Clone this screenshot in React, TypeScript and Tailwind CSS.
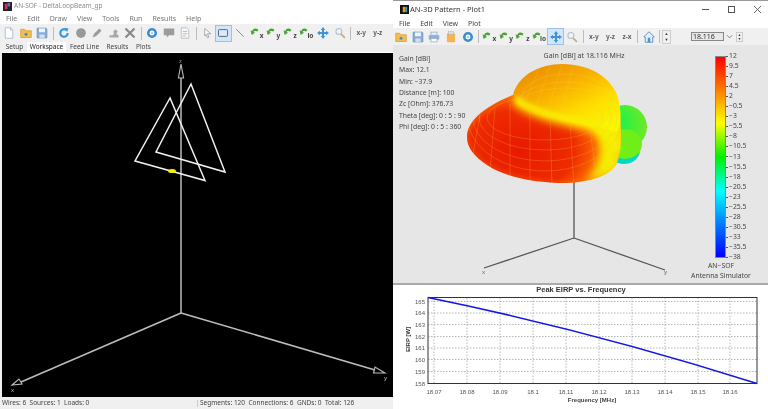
import type { ReactNode } from "react"

const font = "font-['Noto_Sans','Open_Sans',sans-serif]"

function Ic({ children }: { children: ReactNode }) {
  return (
    <svg viewBox="0 0 16 16" className="h-[12px] w-[12px]">
      {children}
    </svg>
  )
}

const FileNew = () => (
  <Ic><path d="M3 1h7l3 3v11H3z" fill="#fff" stroke="#9db0c4" /><path d="M10 1v3h3" fill="#dde6ee" stroke="#9db0c4" /></Ic>
)
const Folder = () => (
  <Ic><path d="M1 3h5l1 2h8v9H1z" fill="#f7bd4c" stroke="#d59a30" /><circle cx="8" cy="9.500" r="2" fill="#3f8dd8" /></Ic>
)
const Save = () => (
  <Ic><path d="M1.500 1.500h12l1 1v12h-13z" fill="#86add8" stroke="#6a94c0" /><rect x="4" y="2" width="8" height="5" fill="#eef4fa" /><rect x="4.500" y="10" width="7" height="4.500" fill="#d4e0ec" /></Ic>
)
const Refresh = () => (
  <Ic><path d="M13 8a5 5 0 1 1-2-4" fill="none" stroke="#3d9ade" strokeWidth="3" /><path d="M9 1l5 1-2 5z" fill="#3d9ade" /></Ic>
)
const Dot = () => <Ic><circle cx="8" cy="8" r="6.500" fill="#999" /></Ic>
const Pencil = () => <Ic><path d="M2 14l2-5 7-7 3 3-7 7z" fill="#9c9c9c" /></Ic>
const Stamp = () => (
  <Ic><path d="M2 14v-3h4l2-2-1-3 3-3 3 3-2 3 3 2v3z" fill="#a8a8a8" /></Ic>
)
const Cross = () => <Ic><path d="M2 2l12 12M14 2L2 14" stroke="#8a8a8a" strokeWidth="3" /></Ic>
const Gear = () => (
  <Ic><circle cx="8" cy="8" r="5" fill="#fff" stroke="#3d8dd0" strokeWidth="3.400" /><circle cx="8" cy="8" r="1.500" fill="#9cc4e6" /></Ic>
)
const Comment = () => <Ic><path d="M1 2h14v9H8l-3 3v-3H1z" fill="#9c9c9c" /></Ic>
const Doc = () => (
  <Ic><path d="M3 1h7l3 3v11H3z" fill="#f4f7fa" stroke="#a6b6c6" /><path d="M5 6h6M5 9h6M5 12h4" stroke="#e0a840" /></Ic>
)
const Cursor = () => <Ic><path d="M5 2l8 7H8.500l2 4.500-1.800 1-2-4.500L5 12z" fill="#fff" stroke="#7f90a2" /></Ic>
const RectTool = () => <Ic><rect x="2" y="3.500" width="12" height="9" rx="1" fill="#dceaf8" stroke="#4a5c70" strokeWidth="1.200" /></Ic>
const LineTool = () => <Ic><path d="M3 3l10 10" stroke="#777" strokeWidth="1.100" /></Ic>
const Move = () => (
  <Ic><path d="M8 0l3 4H9.400v2.600H12V5l4 3-4 3V9.400H9.400V12H11l-3 4-3-4h1.600V9.400H4V11L0 8l4-3v1.600h2.600V4H5z" fill="#3d94de" /></Ic>
)
const Magnify = () => (
  <Ic><circle cx="6.500" cy="6" r="4" fill="#eef3f8" stroke="#b2c0cc" strokeWidth="1.400" /><path d="M9.500 9.500l5 5" stroke="#c4ab78" strokeWidth="2.200" /></Ic>
)
const Printer = () => (
  <Ic><rect x="4" y="1.500" width="8" height="4" fill="#eef3f8" stroke="#8fabcb" /><rect x="1" y="5.500" width="14" height="6" fill="#8fb0d4" /><rect x="4" y="10" width="8" height="4.500" fill="#fff" stroke="#8fabcb" /></Ic>
)
const Clipboard = () => (
  <Ic><rect x="2.500" y="3" width="11" height="12" rx="1" fill="#f6b351" /><rect x="5" y="1" width="6" height="3.500" fill="#ddd" stroke="#aaa" strokeWidth=".6" /></Ic>
)
const Home = () => (
  <Ic><path d="M8 1L1 8h2v7h10V8h2z" fill="#e6eff8" stroke="#4f90cc" strokeWidth="1.200" /><rect x="6.300" y="9" width="3.400" height="6" fill="#4f90cc" /></Ic>
)

function Rot({ label }: { label: string }) {
  return (
    <span className="relative flex h-[12px] w-[14px]">
      <svg viewBox="0 0 16 16" className="absolute left-0 top-0 h-[9px] w-[9px]">
        <path d="M15 5C10 1 5 3 4 7L1 6l2 8 6-4-3-1c1-2 4-3 7-1z" fill="#4aa336" />
      </svg>
      <span className="absolute bottom-0 right-0 text-[6.5px] font-bold leading-none text-[#444]">{label}</span>
    </span>
  )
}

function Tool({ children, active }: { children: ReactNode; active?: boolean }) {
  return (
    <div className={`flex h-[17px] w-[16.6px] shrink-0 items-center justify-center ${active ? "border border-[#9cc0ea] bg-[#d3e5f8]" : ""}`}>
      {children}
    </div>
  )
}

const Sep = () => <div className="mx-[2px] h-[13px] w-px shrink-0 bg-[#bdbdbd]" />

const Plane = ({ t }: { t: string }) => (
  <div className="flex h-[17px] w-[16.6px] shrink-0 items-center justify-center text-[6.5px] font-bold text-[#666]">{t}</div>
)

const colorLabels = ["12", "9.5", "7", "4.5", "2", "−0.5", "−3", "−5.5", "−8", "−10.5", "−13", "−15.5", "−18", "−20.5", "−23", "−25.5", "−28", "−30.5", "−33", "−35.5", "−38"]
const info = ["Gain [dBi]", "Max: 12.1", "Min: −37.9", "Distance [m]: 100", "Zc [Ohm]: 376.73", "Theta [deg]: 0 : 5 : 90", "Phi [deg]: 0 : 5 : 360"]

function Workspace() {
  return (
    <svg viewBox="2 52 391 344" className="h-full w-full">
      <g stroke="#bdbdbd" strokeWidth="1.500" fill="none">
        <path d="M181 312V77" />
        <path d="M181 63l-2.600 14h5.200z" strokeWidth="1.100" />
        <path d="M181 312L21 381" />
        <path d="M12 384l7-6 3 5z" strokeWidth="1.100" />
        <path d="M181 312L375 369" />
        <path d="M385 372l-10-6-1.500 6z" strokeWidth="1.100" />
      </g>
      <g stroke="#f2f2f2" strokeWidth="1.500" fill="none" strokeLinejoin="miter">
        <path d="M170 97L135 160L205 179.500Z" />
        <path d="M191 83L156 151L225 171Z" />
      </g>
      <ellipse cx="172" cy="170" rx="4" ry="2" fill="#f5f000" />
      <text x="179" y="62" fontSize="6" fill="#999">z</text>
      <text x="11" y="391" fontSize="6" fill="#bbb">x</text>
      <text x="384" y="379" fontSize="6" fill="#bbb">y</text>
    </svg>
  )
}

function Pattern() {
  const lobe = "M467 137C467 122 482 108 513 95C540 100 590 105 620 110C621 130 622 150 617 163C610 176 590 182 566 183C535 183 505 177 487 165C474 156 467 148 467 137Z"
  const dome = "M513 95C518 75 540 64 562 64C592 64 618 80 620 108C621 116 620 125 617 132C600 128 560 120 540 114C530 110 520 103 513 95Z"
  const crease = "M516 98C528 108 552 116 580 121C595 124 610 132 618 150"
  return (
    <svg viewBox="393 45 375 238" className="absolute inset-0 h-full w-full">
      <defs>
        <radialGradient id="lobeFill" gradientUnits="userSpaceOnUse" cx="520" cy="150" r="108" gradientTransform="translate(0 37.500) scale(1 .75)">
          <stop offset="0" stopColor="#e81800" />
          <stop offset=".5" stopColor="#ee2c00" />
          <stop offset=".72" stopColor="#fb6a00" />
          <stop offset=".92" stopColor="#ffc000" />
          <stop offset="1" stopColor="#fff000" />
        </radialGradient>
        <linearGradient id="domeFill" x1="0" y1="0" x2=".8" y2="1">
          <stop offset="0" stopColor="#e68400" />
          <stop offset=".4" stopColor="#f8ac00" />
          <stop offset=".75" stopColor="#ffe000" />
          <stop offset="1" stopColor="#f8f800" />
        </linearGradient>
        <radialGradient id="sideFill" cx=".2" cy=".45" r=".8">
          <stop offset="0" stopColor="#00f0b0" />
          <stop offset=".4" stopColor="#30f040" />
          <stop offset="1" stopColor="#70e828" />
        </radialGradient>
        <filter id="soft" x="-20%" y="-30%" width="140%" height="160%"><feGaussianBlur stdDeviation="4" /></filter>
        <filter id="softer" x="-20%" y="-30%" width="140%" height="160%"><feGaussianBlur stdDeviation="2" /></filter>
        <clipPath id="lobeClip"><path d={lobe} /></clipPath>
        <clipPath id="domeClip"><path d={dome} /></clipPath>
      </defs>
      <path d="M574 180V238M574 238L484 268M574 238L665 270" stroke="#555" strokeWidth="1.300" fill="none" />
      <text x="482" y="274" fontSize="6" fill="#666">x</text>
      <text x="664" y="274" fontSize="6" fill="#666">y</text>
      <ellipse cx="624" cy="150" rx="16" ry="14" fill="#00d8c8" />
      <ellipse cx="625" cy="127" rx="22" ry="22" fill="url(#sideFill)" />
      <ellipse cx="625" cy="144" rx="17" ry="15" fill="#70ee18" />
      <path d={lobe} fill="url(#lobeFill)" />
      <g clipPath="url(#lobeClip)">
        <path d={lobe} fill="none" stroke="#ff9000" strokeWidth="2" opacity=".5" filter="url(#softer)" />
        <path d={crease} fill="none" stroke="#ffe800" strokeWidth="14" filter="url(#soft)" />
        <path d="M622 115L618 172L585 182C604 165 604 140 594 122Z" fill="#f4ee00" filter="url(#soft)" />
      </g>
      <path d={dome} fill="url(#domeFill)" />
      <path d={crease} fill="none" stroke="#f8ee00" strokeWidth="5" filter="url(#softer)" />
      <g clipPath="url(#lobeClip)" stroke="#ffb84a" strokeWidth=".4" fill="none" opacity=".65">
        <ellipse cx="545" cy="118" rx="58" ry="22" />
        <ellipse cx="545" cy="118" rx="66" ry="32" />
        <ellipse cx="545" cy="118" rx="72" ry="43" />
        <ellipse cx="545" cy="118" rx="77" ry="53" />
        <path d="M480 115L472 160M495 108L490 172M510 104L510 180M530 110L530 184M550 116L552 186M570 122L574 186M590 126L596 180" />
      </g>
      <g clipPath="url(#domeClip)" stroke="#f8d860" strokeWidth=".3" fill="none" opacity=".7">
        <ellipse cx="566" cy="112" rx="54" ry="24" />
        <ellipse cx="566" cy="106" rx="50" ry="24" />
        <ellipse cx="566" cy="98" rx="44" ry="24" />
        <path d="M522 110L540 66M534 112L550 65M546 116L562 64M558 120L574 64" />
      </g>
    </svg>
  )
}

const yTicks = [
  [165, 302], [164, 313.500], [163, 325], [162, 337], [161, 348.500], [160, 360], [159, 372], [158, 384],
]
const xTicks = [
  ["18.07", 434], ["18.08", 467], ["18.09", 500], ["18.1", 533], ["18.11", 566], ["18.12", 599], ["18.13", 632], ["18.14", 665], ["18.15", 698], ["18.16", 730],
] as const

function Chart() {
  return (
    <svg viewBox="393 286 375 123" className="h-full w-full">
      <text x="581" y="292" textAnchor="middle" fontSize="7.500" fontWeight="700" fill="#333" fontFamily="Liberation Sans">Peak EIRP vs. Frequency</text>
      <g stroke="#999" strokeWidth=".7" strokeDasharray="1.500 1.500">
        {yTicks.map(([v, y]) => <path key={v} d={`M428 ${y}H757`} />)}
        {xTicks.map(([v, x]) => <path key={v} d={`M${x} 298V384`} />)}
      </g>
      <rect x="428" y="298" width="329" height="86" fill="none" stroke="#333" strokeWidth="1" />
      <path d="M428 298Q590 331 757 384" fill="none" stroke="#1414e6" strokeWidth="1.500" />
      <g fontSize="6" fill="#555" fontFamily="Liberation Sans">
        {yTicks.map(([v, y]) => <text key={v} x="425" y={y + 2} textAnchor="end">{v}</text>)}
        {xTicks.map(([v, x]) => <text key={v} x={x} y="394" textAnchor="middle">{v}</text>)}
      </g>
      <text x="592" y="402" textAnchor="middle" fontSize="6" fontWeight="700" fill="#444" fontFamily="Liberation Sans">Frequency [MHz]</text>
      <text transform="translate(410 340) rotate(-90)" textAnchor="middle" fontSize="6" fontWeight="700" fill="#333" fontFamily="Liberation Sans">EIRP [W]</text>
    </svg>
  )
}

export default function App() {
  return (
    <div className={`flex h-[409px] w-[768px] overflow-hidden bg-white blur-[0.3px] ${font}`}>
      {/* main window */}
      <div className="flex w-[393px] shrink-0 flex-col bg-[#f0f0f0]">
        <div className="flex h-[13px] shrink-0 items-center gap-[2px] bg-white pl-[3px]">
          <svg viewBox="0 0 10 10" className="h-[9px] w-[9px]">
            <rect width="10" height="10" fill="#222" />
            <rect x="2" y="2" width="3" height="6" fill="#d0306a" />
            <rect x="5" y="1" width="3" height="4" fill="#5b6ad0" />
          </svg>
          <span className="text-[6.5px] leading-none text-[#8a8a8a]">AN-SOF - DeltaLoopBeam_gp</span>
        </div>
        <div className="flex h-[11px] shrink-0 items-center gap-[10px] bg-white pl-[6px] text-[7px] leading-none text-[#777]">
          {["File", "Edit", "Draw", "View", "Tools", "Run", "Results", "Help"].map((m) => <span key={m}>{m}</span>)}
        </div>
        <div className="flex h-[18px] shrink-0 items-center pl-[1px]">
          <Tool><FileNew /></Tool><Tool><Folder /></Tool><Tool><Save /></Tool>
          <Sep />
          <Tool><Refresh /></Tool><Tool><Dot /></Tool><Tool><Pencil /></Tool><Tool><Stamp /></Tool><Tool><Cross /></Tool>
          <Sep />
          <Tool><Gear /></Tool><Tool><Comment /></Tool><Tool><Doc /></Tool>
          <Sep />
          <Tool><Cursor /></Tool><Tool active><RectTool /></Tool><Tool><LineTool /></Tool>
          <Tool><Rot label="x" /></Tool><Tool><Rot label="y" /></Tool><Tool><Rot label="z" /></Tool><Tool><Rot label="io" /></Tool>
          <Tool><Move /></Tool><Tool><Magnify /></Tool>
          <Sep />
          <Plane t="x-y" /><Plane t="y-z" />
        </div>
        <div className="flex h-[10px] shrink-0 items-end pl-[2px] text-[6.5px] leading-none text-[#444]">
          <span className="flex h-[9px] w-[25px] items-center justify-center">Setup</span>
          <span className="flex h-[10px] w-[39px] items-center justify-center bg-white text-[#222]">Workspace</span>
          <span className="flex h-[9px] w-[37px] items-center justify-center">Feed Line</span>
          <span className="flex h-[9px] w-[29px] items-center justify-center">Results</span>
          <span className="flex h-[9px] w-[23px] items-center justify-center">Plots</span>
        </div>
        <div className="h-[1px] shrink-0 bg-white" />
        <div className="ml-[2px] h-[344px] shrink-0 bg-black">
          <Workspace />
        </div>
        <div className="flex h-[13px] shrink-0 items-center text-[6.5px] leading-none text-[#444]">
          <span className="w-[197px] pl-[2px]">Wires: 6&nbsp; Sources: 1&nbsp; Loads: 0</span>
          <span className="border-l border-[#ccc] pl-[2px]">Segments: 120&nbsp; Connections: 6&nbsp; GNDs: 0&nbsp; Total: 126</span>
        </div>
      </div>

      {/* 3D pattern window */}
      <div className="flex w-[375px] shrink-0 flex-col border-t border-[#999]">
        <div className="flex h-[17px] shrink-0 items-center bg-white pl-[7px]">
          <svg viewBox="0 0 10 10" className="mr-[1px] h-[9px] w-[9px]">
            <rect width="10" height="10" fill="#111" />
            <rect x="3" y="2" width="3" height="6" fill="#e8a020" />
            <rect x="6" y="2" width="2" height="6" fill="#3aa0d8" />
          </svg>
          <span className="text-[7.5px] leading-none text-[#333]">AN-3D Pattern - Plot1</span>
          <span className="ml-auto flex items-center gap-[19px] pr-[7px] text-[#555]">
            <span className="h-px w-[7px] bg-[#555]" />
            <span className="h-[7px] w-[7px] border border-[#555]" />
            <svg viewBox="0 0 8 8" className="h-[7px] w-[7px]"><path d="M0 0l8 8M8 0L0 8" stroke="#555" /></svg>
          </span>
        </div>
        <div className="flex h-[10px] shrink-0 items-center gap-[10px] bg-white pl-[6px] text-[7px] leading-none text-[#444]">
          {["File", "Edit", "View", "Plot"].map((m) => <span key={m}>{m}</span>)}
        </div>
        <div className="flex h-[17px] shrink-0 items-center bg-[#f0f0f0]">
          <Tool><Folder /></Tool><Tool><Save /></Tool><Tool><Printer /></Tool><Tool><Clipboard /></Tool><Tool><Gear /></Tool>
          <Sep />
          <Tool><Rot label="x" /></Tool><Tool><Rot label="y" /></Tool><Tool><Rot label="z" /></Tool><Tool><Rot label="io" /></Tool>
          <Tool active><Move /></Tool><Tool><Magnify /></Tool>
          <Sep />
          <Plane t="x-y" /><Plane t="y-z" /><Plane t="z-x" />
          <Sep />
          <Tool><Home /></Tool>
          <Sep />
          <div className="flex h-[14px] w-[9px] flex-col items-center justify-around border border-[#ccc] text-[4px] leading-none text-[#333]"><span>▲</span><span>▼</span></div>
          <div className="ml-[20px] flex h-[9px] w-[33px] items-center border border-[#888] bg-[#e8e8e8] pl-[1px] text-[7px] leading-none text-[#333]">18.116</div>
          <svg viewBox="0 0 8 8" className="mx-[2px] h-[7px] w-[7px]"><path d="M1 2.500l3 3 3-3" fill="none" stroke="#777" /></svg>
          <div className="ml-[1px] flex h-[10px] w-[7px] flex-col items-center justify-around border border-[#ccc] text-[3.500px] leading-none text-[#333]"><span>▲</span><span>▼</span></div>
        </div>
        <div className="relative flex h-[238px] shrink-0 bg-[#e6e6e6] text-[6.5px] leading-none text-[#444]">
          <Pattern />
          <div className="relative flex h-[86px] flex-col justify-between pl-[6px] pt-[11px] text-[6.8px]">
            {info.map((l) => <span key={l}>{l}</span>)}
          </div>
          <div className="absolute left-0 right-0 top-[7px] pl-[7px] text-center text-[7px]">Gain [dBi] at 18.116 MHz</div>
          <div className="relative ml-auto flex w-[61px] flex-col items-center pt-[11px]">
            <div className="flex h-[202px] w-full">
              <div className="ml-[8px] h-full w-[11px] border border-[#888] bg-[linear-gradient(to_bottom,#ff0000_0%,#ff8000_17%,#ffff00_33%,#00f000_50%,#00ffff_67%,#0080ff_83%,#0000ff_100%)]" />
              <div className="-mt-[3px] flex h-[208px] flex-col justify-between text-[6.8px] text-[#444]">
                {colorLabels.map((l) => (
                  <span key={l} className="flex h-[6px] items-center">
                    <span className="mr-[1px] h-px w-[2px] bg-[#555]" />
                    {l}
                  </span>
                ))}
              </div>
            </div>
            <span className="mr-[33px] mt-[5px] text-[6.8px]">AN−SOF</span>
            <span className="mr-[33px] mt-[3px] whitespace-nowrap text-[6.8px]">Antenna Simulator</span>
          </div>
        </div>
        <div className="h-[2px] shrink-0 bg-[#aaa]" />
        <div className="min-h-0 flex-1 bg-white">
          <Chart />
        </div>
      </div>
    </div>
  )
}
